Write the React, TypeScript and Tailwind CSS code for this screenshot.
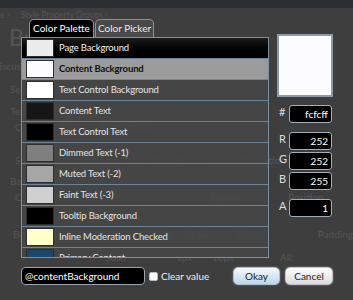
const rows: { name: string; sw: string; row: string; text: string }[] = [
  { name: 'Page Background', sw: 'bg-[#ececec]', row: 'bg-gradient-to-b from-[#1c1c1c] to-black', text: 'text-[#f2f2f2]' },
  { name: 'Content Background', sw: 'bg-[#fcfcff]', row: 'bg-[#9b9b9b]', text: 'text-[#111] font-bold' },
  { name: 'Text Control Background', sw: 'bg-white', row: 'bg-[#464646]/85', text: 'text-[#e4e4e4]' },
  { name: 'Content Text', sw: 'bg-[#161616]', row: 'bg-[#464646]/85', text: 'text-[#e4e4e4]' },
  { name: 'Text Control Text', sw: 'bg-black', row: 'bg-[#464646]/85', text: 'text-[#e4e4e4]' },
  { name: 'Dimmed Text (-1)', sw: 'bg-[#7f7f7f]', row: 'bg-[#464646]/85', text: 'text-[#e4e4e4]' },
  { name: 'Muted Text (-2)', sw: 'bg-[#a6a6a6]', row: 'bg-[#464646]/85', text: 'text-[#e4e4e4]' },
  { name: 'Faint Text (-3)', sw: 'bg-[#d0d0d0]', row: 'bg-[#464646]/85', text: 'text-[#e4e4e4]' },
  { name: 'Tooltip Background', sw: 'bg-black', row: 'bg-[#464646]/85', text: 'text-[#e4e4e4]' },
  { name: 'Inline Moderation Checked', sw: 'bg-[#ffffcc]', row: 'bg-[#464646]/85', text: 'text-[#e4e4e4]' },
  { name: 'Primary Content', sw: 'bg-[#1a4670]', row: 'bg-[#464646]/85', text: 'text-[#e4e4e4]' },
];

function Field({ label, value, className }: { label: string; value: string; className: string }) {
  return (
    <div className={`flex h-[18px] ${className}`}>
      <span className="w-[12px] pl-[2px] text-[11px] leading-[14px] text-[#dedede]">{label}</span>
      <div className="ml-auto mr-[1px] w-[43px] h-[18px] bg-black border border-[#a3adb5] rounded-[3px] text-white text-[10px] flex items-center justify-end pr-[3px]">
        {value}
      </div>
    </div>
  );
}

export default function App() {
  return (
    <div className="relative w-[353px] h-[300px] overflow-hidden bg-[#3e3e3e] font-[Lato,sans-serif]">
      {/* background page */}
      <div className="flex flex-col text-[10px] text-[#555555] leading-none">
        <div className="h-[8px] bg-[#2a2d31]" />
        <div className="h-[14px] flex items-center text-[8.5px]">
          <span className="-ml-[2px]">le ›</span>
          <span className="ml-[12px]">Style Property Groups ›</span>
        </div>
        <div className="h-[30px] flex items-center pl-[9px] text-[23px]">Button Blocks</div>
        <div className="mt-[6px] h-[16px] flex items-center"><span className="-ml-[8px]">Discussion</span></div>
        <div className="mt-[7px] h-[16px] flex items-center pl-[10px]">Selector</div>
        <div className="mt-[6px] h-[16px] flex items-center pl-[10px]">Text</div>
        <div className="h-[16px] flex items-center pl-[15px]">
          <span className="w-[45px]">Color</span>
          <span className="w-[40px]">Size</span>
          <span>Font Family</span>
        </div>
        <div className="mt-[17px] h-[16px] flex items-center pl-[15px]">
          <span className="w-[65px]">Style</span>
          <span className="w-[48px]">Overline</span>
          <span className="w-[75px]">Line-Through</span>
          <span>No text decoration</span>
        </div>
        <div className="mt-[5px] h-[16px] flex items-center pl-[10px]">Background</div>
        <div className="h-[16px] flex items-center pl-[15px]">
          <span className="w-[195px]">Color</span>
          <span className="w-[78px]">Repeat</span>
          <span>Position</span>
        </div>
        <div className="mt-[21px] h-[16px] flex items-center pl-[13px]">
          <span className="w-[44px]">Border</span>
          <span className="w-[101px]">Style</span>
          <span className="w-[41px]">Width</span>
          <span className="w-[56px]">Radius</span>
          <span className="w-[90px]">Margin</span>
          <span>Padding</span>
        </div>
        <div className="mt-[7px] h-[16px] flex items-center pl-[105px]">
          <span className="w-[71px]">Solid</span>
          <span className="w-[36px]">1px</span>
          <span className="w-[68px]">10px</span>
          <span>All:</span>
        </div>
      </div>

      {/* dialog */}
      <div className="absolute inset-0 flex flex-col pt-[19px] pl-[21px]">
        <div className="flex">
          <div className="w-[248px] flex flex-col">
            <div className="h-[18px] flex pl-[8px] gap-[1px]">
              <div className="w-[65px] h-[18px] bg-black border border-b-0 border-[#8e8e8e] rounded-t-[5px] text-white text-[10px] flex items-center justify-center">
                Color Palette
              </div>
              <div className="w-[59px] h-[18px] bg-[#4a4a4a]/90 border border-b-0 border-[#8e8e8e] rounded-t-[5px] text-[#ececec] text-[10px] flex items-center justify-center">
                Color Picker
              </div>
            </div>
            <div className="h-[221px] border border-[#7a90a4] overflow-hidden flex flex-col">
              {rows.map((r) => (
                <div key={r.name} className={`h-[21px] shrink-0 border-b border-[#6d8397] flex items-center ${r.row}`}>
                  <div className={`ml-[4px] w-[28px] h-[18px] border border-[#2e2e2e] ${r.sw}`} />
                  <span className={`ml-[5px] text-[9.5px] tracking-[-0.15px] ${r.text}`}>{r.name}</span>
                </div>
              ))}
            </div>
          </div>
          <div className="ml-[8px] w-[56px] flex flex-col">
            <div className="mt-[15px] h-[63px] border-2 border-[#8d9ba8] bg-[#fcfcff]" />
            <Field label="#" value="fcfcff" className="mt-[8px]" />
            <Field label="R" value="252" className="mt-[9px]" />
            <Field label="G" value="252" className="mt-[2px]" />
            <Field label="B" value="255" className="mt-[2px]" />
            <Field label="A" value="1" className="mt-[9px]" />
          </div>
        </div>
        <div className="mt-[9px] h-[18px] w-[312px] flex items-center">
          <div className="w-[124px] h-[18px] bg-black border border-[#9aa4ac] rounded-[4px] text-white text-[10px] pl-[3px] flex items-center">
            @contentBackground
          </div>
          <div className="ml-[4px] w-[9px] h-[9px] bg-white rounded-[2px] border border-[#bbb]" />
          <span className="ml-[3px] text-[10px] text-[#eeeeee]">Clear value</span>
          <div className="ml-auto w-[47px] h-[18px] rounded-[5px] border border-[#a9bfcd] bg-gradient-to-b from-[#f4f9fd] to-[#bcd8ea] text-[#222] text-[10px] flex items-center justify-center shadow-[0_0_2px_rgba(255,255,255,0.4)]">
            Okay
          </div>
          <div className="ml-[5px] w-[48px] h-[18px] rounded-[5px] border border-[#c4c4c4] bg-gradient-to-b from-white to-[#dcdcdc] text-[#222] text-[10px] flex items-center justify-center shadow-[0_0_2px_rgba(255,255,255,0.4)]">
            Cancel
          </div>
        </div>
      </div>
    </div>
  );
}
